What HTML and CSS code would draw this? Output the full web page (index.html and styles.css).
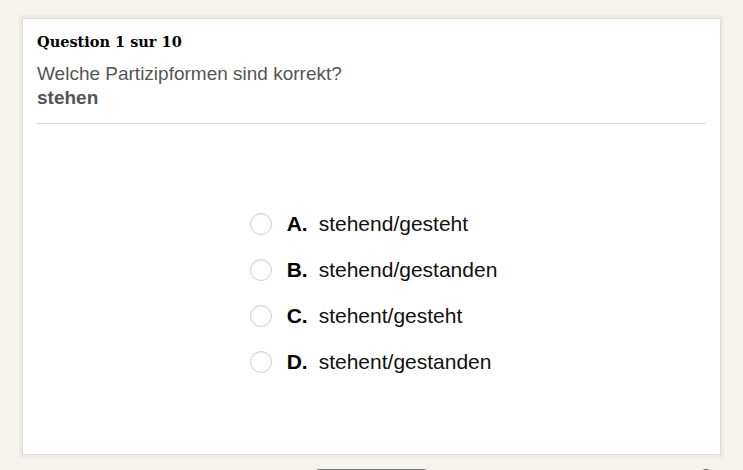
FILE: index.html
```html
<!DOCTYPE html>
<html lang="de">
<head>
<meta charset="utf-8">
<title>Question 1 sur 10</title>
<link rel="stylesheet" href="styles.css">
</head>
<body>
<div class="page">
  <section class="card">
    <header class="head">
      <h1 class="title">Question 1 sur 10</h1>
      <p class="question">Welche Partizipformen sind korrekt?</p>
      <p class="word">stehen</p>
    </header>
    <div class="body">
      <ul class="options">
        <li class="option"><span class="radio"></span><span class="letter">A.</span><span class="text">stehend/gesteht</span></li>
        <li class="option"><span class="radio"></span><span class="letter">B.</span><span class="text">stehend/gestanden</span></li>
        <li class="option"><span class="radio"></span><span class="letter">C.</span><span class="text">stehent/gesteht</span></li>
        <li class="option"><span class="radio"></span><span class="letter">D.</span><span class="text">stehent/gestanden</span></li>
      </ul>
    </div>
  </section>
  <footer class="footer">
    <span class="slot"></span>
    <button class="btn" type="button" aria-label="Weiter"></button>
    <span class="slot end"><span class="dot"></span></span>
  </footer>
</div>
</body>
</html>
```

FILE: styles.css
```css
* { box-sizing: border-box; }
html, body {
  margin: 0;
  padding: 0;
  height: 470px;
  overflow: hidden;
  background: #f5f3ee;
}
.page {
  padding: 18px 22px 0 22px;
  display: flex;
  flex-direction: column;
}
.card {
  height: 437px;
  background: #fff;
  border: 1px solid #dedbd6;
  box-shadow: 0 0 0 3px rgba(235, 232, 226, 0.6);
  padding: 0 14px;
  display: flex;
  flex-direction: column;
}
.head {
  padding-top: 13px;
  border-bottom: 1px solid #dadada;
  padding-bottom: 13px;
}
.title {
  margin: 0;
  font-family: "DejaVu Serif", "Liberation Serif", serif;
  font-weight: bold;
  font-size: 14.5px;
  line-height: 20px;
  color: #000;
}
.question {
  margin: 10px 0 0 0;
  font-family: "Liberation Sans", Arial, sans-serif;
  font-size: 19px;
  line-height: 24px;
  color: #555;
}
.word {
  margin: 0;
  font-family: "Liberation Sans", Arial, sans-serif;
  font-weight: bold;
  font-size: 19px;
  line-height: 24px;
  color: #555;
}
.body {
  flex: 1;
  display: flex;
  align-items: center;
  justify-content: center;
  padding-top: 7px;
}
.options {
  list-style: none;
  margin: 0;
  padding: 0 0 0 4px;
  display: flex;
  flex-direction: column;
}
.option {
  display: flex;
  align-items: center;
  height: 46px;
  font-family: "Liberation Sans", Arial, sans-serif;
  font-size: 21px;
  color: #111;
}
.radio {
  width: 22px;
  height: 22px;
  border-radius: 50%;
  border: 1px solid #cfcfcf;
  box-shadow: inset 0 1px 2px rgba(0, 0, 0, 0.06);
  background: #fff;
  flex: none;
  margin-right: 15px;
}
.letter {
  font-weight: bold;
  color: #000;
  width: 32px;
}
.text { color: #111; }
.footer {
  margin-top: 14px;
  display: grid;
  grid-template-columns: 1fr 111px 1fr;
  align-items: start;
}
.slot { display: flex; }
.slot.end { justify-content: flex-end; padding-right: 9px; }
.btn {
  width: 111px;
  height: 36px;
  border: none;
  border-radius: 3px;
  background: #7a7a78;
  padding: 0;
}
.dot {
  width: 12px;
  height: 12px;
  border-radius: 50%;
  background: #666;
}
```
